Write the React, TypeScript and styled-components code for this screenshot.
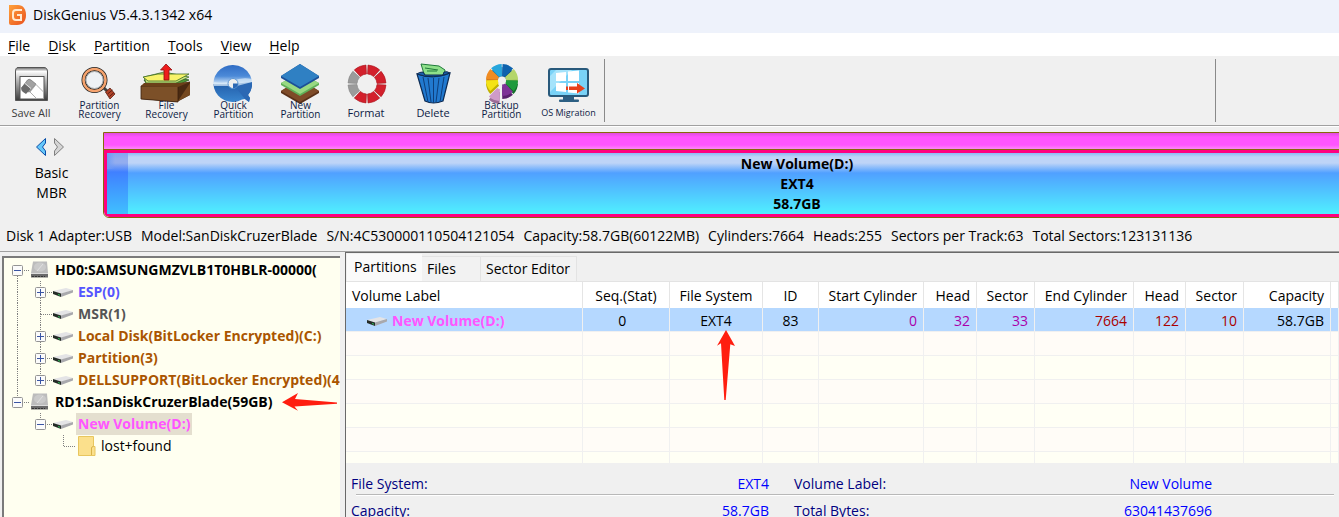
import React from 'react';
import styled, { createGlobalStyle } from 'styled-components';

const GlobalStyle = createGlobalStyle`
  *, *::before, *::after { box-sizing: border-box; }
  body { margin: 0; background: #f0f0f0; }
  button { font: inherit; color: inherit; border: 0; padding: 0; margin: 0; background: none; cursor: pointer; }
`;

const Window = styled.div`
  display: flex;
  flex-direction: column;
  height: 100vh;
  overflow: hidden;
  background: #f0f0f0;
  color: #000;
  font-family: 'Open Sans', 'Noto Sans', sans-serif;
  font-size: 14px;
  line-height: 20px;
  white-space: nowrap;
`;

const TitleBar = styled.header`
  display: flex;
  flex: none;
  align-items: center;
  gap: 6px;
  height: 33px;
  padding: 0 8px 4px;
  background: #eef2fb;
`;

const Title = styled.h1`
  margin: 0;
  font-size: 14px;
  font-weight: 400;
`;

const MenuBar = styled.nav`
  display: flex;
  flex: none;
  align-items: center;
  gap: 18px;
  height: 23px;
  padding: 2px 8px 0;
  background: #fff;
`;

const MenuItem = styled.button`
  line-height: 20px;
  u { text-underline-offset: 2px; }
`;

const Toolbar = styled.div`
  display: flex;
  flex: none;
  gap: 7px;
  height: 71px;
  padding: 3px 1px 0;
  border-bottom: 1px solid #fff;
  box-shadow: inset 0 -1px 0 #a0a0a0;
`;

const ToolButton = styled.button`
  display: flex;
  flex-direction: column;
  align-items: center;
  width: 60px;
  height: 64px;
  padding-top: 2px;
  color: #0d1b45;
  svg { display: block; overflow: visible; }
`;

const ToolLabel = styled.span<{ $size: number; $muted?: boolean }>`
  display: flex;
  align-items: flex-end;
  justify-content: center;
  height: 18px;
  font-size: ${(p) => p.$size}px;
  line-height: 9px;
  text-align: center;
  white-space: pre-line;
  color: ${(p) => (p.$muted ? '#3c3c3c' : 'inherit')};
  padding-bottom: ${(p) => (p.$size === 10 ? 0 : 2)}px;
  padding-left: ${(p) => (p.$size === 11 ? 0 : 3)}px;
`;

const ToolSeparator = styled.div<{ $gap?: number }>`
  width: 1px;
  height: 63px;
  margin-left: ${(p) => p.$gap ?? 0}px;
  background: #8a8a8a;
`;

const DiskPanel = styled.section`
  display: grid;
  flex: none;
  grid-template-columns: 103px 1fr;
  padding-top: 5px;
  overflow: hidden;
`;

const DiskKind = styled.div`
  display: flex;
  flex-direction: column;
  align-items: center;
  padding-top: 5px;
`;

const DiskNav = styled.div`
  display: flex;
  gap: 6px;
  height: 26px;
  padding-right: 3px;
  button { display: flex; height: 20px; }
`;

const DiskBar = styled.div`
  display: flex;
  flex-direction: column;
  height: 86px;
  margin-right: -151px;
  border: 1px solid #86690c;
  border-radius: 0 0 6px 6px;
  overflow: hidden;
`;

const DiskStrip = styled.div`
  height: 17px;
  border-bottom: 1px solid #86690c;
  background: linear-gradient(#e04ce0, #ff55ff 4px, #ff55ff 12px, #ff88f8);
`;

const VolumeBlock = styled.div`
  display: grid;
  grid-template-columns: 21px 1fr;
  flex: 1;
  border: 3px solid #ff0080;
  border-radius: 0 0 5px 5px;
  background: linear-gradient(#8db8f6, #bed4f7 4px, #bed4f7 10px, #50a0ff 20px, #50f0ff);
`;

const UsedSpace = styled.div`
  background: linear-gradient(90deg, #6f9cf5, transparent 8px) 0 0 / 100% 16px no-repeat,
    linear-gradient(#82a4f2, #93adef 6px, #93adef 10px, #4080ff 19px, #40c0ff);
`;

const VolumeText = styled.div`
  padding: 1px 20px 0 0;
  font-weight: 700;
  text-align: center;
`;

const DiskInfo = styled.div`
  display: flex;
  flex: none;
  gap: 9px;
  height: 34px;
  padding: 8px 6px 0;
  border-bottom: 1px solid #a0a0a0;
`;

const Panes = styled.main`
  display: grid;
  grid-template-columns: 340px 1fr;
  gap: 5px;
  flex: 1;
  min-height: 0;
`;

const TreePane = styled.div`
  position: relative;
  margin: 4px 0 0 2px;
  border: solid #7a7a7a;
  border-width: 2px 0 0 2px;
  background: #fffff0;
  overflow: hidden;
`;

const TreeList = styled.ul`
  margin: 0;
  padding: 1px 0 0 2px;
  list-style: none;
`;

const TreeRow = styled.li`
  display: flex;
  align-items: center;
  height: 22px;
  svg { flex: none; display: block; }
`;

const TreeLabel = styled.button<{ $color: string; $bold?: boolean; $selected?: boolean }>`
  height: 22px;
  margin-left: 2px;
  padding: 0 2px;
  color: ${(p) => p.$color};
  font-weight: ${(p) => (p.$bold ? 700 : 400)};
  background: ${(p) => (p.$selected ? '#e4dfcf' : 'transparent')};
`;

const ContentPane = styled.div`
  min-width: 0;
  border: solid #696969;
  border-width: 1px 0 0 1px;
`;

const TabStrip = styled.div`
  display: flex;
  align-items: flex-end;
  height: 29px;
  padding: 0 1px;
  border-bottom: 1px solid #e3e3e3;
`;

const Tab = styled.button<{ $active?: boolean; $width: number }>`
  width: ${(p) => p.$width}px;
  height: ${(p) => (p.$active ? 27 : 25)}px;
  padding: ${(p) => (p.$active ? '0 0 3px 7px' : '0 0 1px 5px')};
  border: 1px solid ${(p) => (p.$active ? '#fafafa' : '#e3e3e3')};
  border-width: 1px 1px 0 0;
  background: ${(p) => (p.$active ? '#fafafa' : '#f2f2f2')};
  text-align: left;
`;

const TableArea = styled.div`
  position: relative;
  height: 181px;
  overflow: hidden;
`;

const Table = styled.table`
  width: 100%;
  table-layout: fixed;
  border-collapse: separate;
  border-spacing: 0;
`;

const HeadCell = styled.th<{ $align: string }>`
  height: 26px;
  padding: 2px 6px 0;
  border-right: 1px solid #e5e5e5;
  background: #fff;
  font-weight: 400;
  text-align: ${(p) => p.$align};
`;

const BodyRow = styled.tr<{ $selected?: boolean }>`
  background: ${(p) => (p.$selected ? '#b5d8ff' : '#fffcf7')};
  &:nth-child(odd) { background: ${(p) => (p.$selected ? '#b5d8ff' : '#fffff5')}; }
`;

const Cell = styled.td<{ $align: string; $color?: string }>`
  height: 24px;
  padding: 2px 6px 0;
  border: solid #f0f0f0;
  border-width: 0 1px 1px 0;
  color: ${(p) => p.$color ?? '#000'};
  text-align: ${(p) => p.$align};
`;

const VolumeName = styled.div`
  display: flex;
  align-items: center;
  gap: 4px;
  height: 20px;
  padding-left: 14px;
  color: #ff55ff;
  font-weight: 700;
`;

const Pointer = styled.svg<{ $left: number; $top: number }>`
  position: absolute;
  left: ${(p) => p.$left}px;
  top: ${(p) => p.$top}px;
  fill: #ff1e10;
  pointer-events: none;
`;

const Details = styled.dl`
  margin: 0;
  padding: 9px 5px 0;
`;

const DetailRow = styled.div`
  display: grid;
  grid-template-columns: 159px 259px 159px 259px;
  height: 27px;
  padding-top: 2px;
  background: linear-gradient(#b8b8b8 0 0) 5px 22px / 100% 1px no-repeat,
    linear-gradient(#fff 0 0) 5px 23px / 100% 1px no-repeat;
  dt:nth-of-type(2) { padding-left: 25px; }
  dd:nth-of-type(2) { padding-left: 25px; margin-right: -25px; }
`;

const DetailName = styled.dt`
  color: #000080;
`;

const DetailValue = styled.dd`
  margin: 0;
  color: #0000ff;
  text-align: right;
`;

/* ---------- drawings ---------- */

const ring = (cx: number, cy: number, r0: number, r1: number, a0: number, a1: number) => {
  const at = (r: number, a: number) => {
    const t = ((a - 90) * Math.PI) / 180;
    return `${(cx + r * Math.cos(t)).toFixed(2)} ${(cy + r * Math.sin(t)).toFixed(2)}`;
  };
  return `M${at(r0, a0)}L${at(r1, a0)}A${r1} ${r1} 0 0 1 ${at(r1, a1)}L${at(r0, a1)}A${r0} ${r0} 0 0 0 ${at(r0, a0)}Z`;
};

const Art = ({ children }: { children: React.ReactNode }) => (
  <svg width="52" height="40" viewBox="0 0 52 40" aria-hidden="true">{children}</svg>
);

const LogoIcon = () => (
  <svg width="19" height="20" viewBox="0 0 19 20" aria-hidden="true">
    <defs>
      <linearGradient id="logo" x1="0" y1="0" x2="1" y2="1">
        <stop offset="0" stopColor="#ffa23c" /><stop offset="1" stopColor="#e9501c" />
      </linearGradient>
    </defs>
    <path d="M1 0H10C15 0 18 4 18 10S15 20 9 20H3Q1 20 1 18Z" fill="url(#logo)" />
    <path d="M14 5H8Q5 5 5 8V12Q5 15 8 15H13V10H9" fill="none" stroke="#ffe9d0" strokeWidth="2" />
  </svg>
);

const SaveIcon = () => (
  <Art>
    <defs>
      <linearGradient id="save" x1="0" y1="0" x2="0" y2="1">
        <stop offset="0" stopColor="#666" /><stop offset=".12" stopColor="#fdfdfd" />
        <stop offset=".35" stopColor="#c0c0c0" /><stop offset="1" stopColor="#3a3a3a" />
      </linearGradient>
    </defs>
    <path d="M13 6.500H39Q42.500 6.500 42.500 11V39.500H10.500V11Q10.500 6.500 13 6.500Z" fill="url(#save)" stroke="#555" />
    <rect x="15" y="15.500" width="24" height="22.500" fill="#fff" stroke="#555" />
    <path d="M16.500 27L22.500 19Q24 17.500 26 19L31 23L24.500 31L19 30Z" fill="#a2a2a2" stroke="#666" strokeWidth=".6" />
    <path d="M16.500 26.500Q15.500 29 18 31L21 33L25.500 28L20 22.500Z" fill="#6a6a6a" />
    <path d="M20 22.500L26 27.500" stroke="#e4e4e4" />
    <path d="M25 31L31 23.500L38.500 31V37.500H31.500Z" fill="#fff" stroke="#999" strokeWidth=".8" />
  </Art>
);

const SearchIcon = () => (
  <Art>
    <path d="M31 26L36 31" stroke="#444" strokeWidth="3" />
    <path d="M33.500 31L38 27L43 33L38 38Z" fill="#b3442a" stroke="#5a1f12" strokeWidth=".8" />
    <path d="M35.500 33L40.500 29M37.500 35.500L42 31.500" stroke="#5a1f12" />
    <circle cx="22.500" cy="19" r="11" fill="#eef1f5" stroke="#222" strokeWidth="4" />
    <circle cx="22.500" cy="19" r="11" fill="none" stroke="#f5a36e" strokeWidth="2.500" />
    <circle cx="22.500" cy="19" r="8.500" fill="none" stroke="#999" strokeWidth=".8" />
  </Art>
);

const FileRecoveryIcon = () => (
  <Art>
    <g transform="translate(1 0)">
      <path d="M4 19L24 13L49 19L36 25H8Z" fill="#4d9a3a" stroke="#1e4a16" strokeWidth=".7" />
      <path d="M4 16L24 11L49 16L36 22H6Z" fill="#c9e27c" stroke="#2c5e1f" strokeWidth=".7" />
      <path d="M3 16L18 13H49L36 20H8Z" fill="#f8f36a" stroke="#3a6a22" strokeWidth=".8" />
      <path d="M1 25L4 23H37L50 20.500V34L37 41L1 38Z" fill="#4a2a12" />
      <path d="M1 25H38V41L1 38Z" fill="#7c5028" stroke="#3a200c" strokeWidth=".8" />
      <path d="M1 25L4 22H36L50 21L38 26Z" fill="#6b4019" />
      <path d="M38 40L50 22V34Z" fill="#75481f" />
      <path d="M26 3L32 9H29V19H24V9H20.500Z" fill="#ee1c1c" stroke="#8e0f0f" strokeWidth=".8" />
    </g>
  </Art>
);

const QuickIcon = () => (
  <Art>
    <defs>
      <linearGradient id="disc" x1="0" y1="0" x2="0" y2="1">
        <stop offset="0" stopColor="#2f6cc4" /><stop offset=".3" stopColor="#4c8ad8" /><stop offset=".52" stopColor="#d8eafa" />
        <stop offset=".53" stopColor="#2461ad" /><stop offset="1" stopColor="#3a86cf" />
      </linearGradient>
    </defs>
    <g transform="translate(1 0)">
      <path d="M26 4A19 18.500 0 0 1 41 34L43 37L42 41L38 38L35 38.500A19 18.500 0 1 1 26 4Z" fill="url(#disc)" />
      <path d="M26 23L45 21A19 18.500 0 0 1 41 34L43 37L42 41L38 38Z" fill="#2b68b4" />
      <path d="M7 25L22 25L30 25L45 21V18Q34 16 26 20Q16 23 7 21Z" fill="#d9e9f8" opacity=".7" />
      <circle cx="26" cy="22.500" r="5" fill="#efefef" stroke="#5c96d4" />
      <path d="M26 22.500H31A5 5 0 0 1 26 27.500Z" fill="#2b68b4" />
    </g>
  </Art>
);

const LayersIcon = () => (
  <Art>
    <g transform="translate(1 0)">
      <path d="M7 30L26 18L45 30V32L26 43L7 32Z" fill="#5a3018" />
      <path d="M7 30L26 18L45 30L26 41Z" fill="#7e4b28" />
      <path d="M7 22L26 12L45 22V24L26 35L7 24Z" fill="#5faf58" />
      <path d="M7 22L26 12L45 22L26 33Z" fill="#98d982" />
      <path d="M7 15L26 3L45 15V17L26 28L7 17Z" fill="#1c4f97" />
      <path d="M7 15L26 3L45 15L26 26Z" fill="#2f80c3" />
    </g>
  </Art>
);

const FormatIcon = () => (
  <Art>
    {[0, 1, 2, 3, 4, 5, 6, 7].map((i) => (
      <path key={i} d={ring(27, 23, 10, 19, i * 45 + 3, i * 45 + 42)} fill={i === 5 || i === 6 ? '#9b9b9b' : '#d3202c'} stroke={i === 5 || i === 6 ? '#858585' : '#a8161f'} strokeWidth=".6" />
    ))}
  </Art>
);

const DeleteIcon = () => (
  <Art>
    <path d="M14 3L32 5L38 9L37 16H18Z" fill="#8ee08a" stroke="#1f7a3a" />
    <path d="M18 7L31 9M20 10H30" stroke="#1f7a3a" />
    <path d="M10 13Q26 19 43 12L36 40Q26 44 18 40Z" fill="#2179cf" stroke="#0e2b52" strokeWidth="1.200" />
    <path d="M10 13Q26 19 43 12Q40 10 37 11L36 14H18L16 11Q12 11 10 13Z" fill="#1a5fa8" stroke="#0e2b52" />
    <path d="M16 16L21 41M21 17L24 41M26.500 17V42M32 17L29 41M37 16L33 41" stroke="#0e3f7c" />
  </Art>
);

const wheel = ['#0e62ad', '#b4d66a', '#1f9a3c', '#7d3296', '#cf9bc8', '#f4e316', '#f08c22', '#27a6dc'];
const wheelShade = ['#0a4680', '#88a848', '#14702a', '#58206c', '#9c6d96', '#c0b000', '#b86412', '#1a7cab'];

const BackupIcon = () => (
  <Art>
    {[wheelShade, wheel].map((colors, layer) => (
      <g key={layer} transform={layer === 0 ? 'translate(0 3)' : undefined}>
        {colors.map((c, i) => (
          <path
            key={c}
            d={ring(28, 19, 4, 16, i * 45 + 2, i * 45 + 44)}
            transform={i === 4 ? 'translate(-2 5)' : undefined}
            fill={c}
          />
        ))}
      </g>
    ))}
    <circle cx="28" cy="19.500" r="4" fill="#f0f0f0" />
  </Art>
);

const MigrationIcon = () => (
  <Art>
    <g transform="translate(1 0)">
      <path d="M21 34H32V39H21Z" fill="#2c5f83" />
      <rect x="17" y="38.500" width="20" height="2.500" rx="1" fill="#2c5f83" />
      <rect x="7" y="8" width="39" height="27" rx="2" fill="#79d2f7" stroke="#28597b" strokeWidth="2" />
      <path d="M8 31L30 9H14L8 15Z" fill="#a5e3fb" />
      <path d="M14 12L24 11V20H14ZM26 10.500L37 9.500V20H26ZM14 22H24V31L14 30ZM26 22H37V32.500L26 31.500Z" fill="#fff" />
      <path d="M24 25.500H26V29H24ZM27 25.500H35V22L43 27.500L35 32.500V29H27Z" fill="#e8401c" />
    </g>
  </Art>
);

const NavArrow = ({ forward }: { forward?: boolean }) => (
  <svg width="12" height="20" viewBox="0 0 12 20" aria-hidden="true">
    {forward ? (
      <path d="M1.500 1.500L10.500 10L1.500 18.500V14L4.500 10L1.500 6Z" fill="#d5d5d5" stroke="#808080" />
    ) : (
      <path d="M10.500 1.500L1.500 10L10.500 18.500V14L7.500 10L10.500 6Z" fill="#66c8fa" stroke="#0a4fa8" />
    )}
  </svg>
);

const DriveIcon = () => (
  <svg width="22" height="22" viewBox="0 0 22 22" aria-hidden="true">
    <path d="M1 10L14 7L21 9L9 13Z" fill="#e4e4e6" />
    <path d="M1 10L9 12.500V16L1 13Z" fill="#252c27" />
    <path d="M9 12.500L21 9V11.500L9 16Z" fill="#a9a9ad" />
    <path d="M6 13.500L8 14.200" stroke="#2fc45a" />
  </svg>
);

const HardDiskIcon = () => (
  <svg width="22" height="22" viewBox="0 0 22 22" aria-hidden="true">
    <path d="M4 2.500H18L19 14H2Z" fill="#bcbcbc" />
    <ellipse cx="11" cy="8" rx="6" ry="4.500" fill="#cacaca" />
    <path d="M14 5L8 12" stroke="#e0e0e0" />
    <path d="M2 14H19V18.500H2Z" fill="#6a6a6a" />
    <path d="M2 14.500H19" stroke="#dcdcdc" />
    <path d="M3 17.500H16" stroke="#333" strokeDasharray="2 1" />
  </svg>
);

const FolderIcon = () => (
  <svg width="22" height="22" viewBox="0 0 22 22" aria-hidden="true">
    <path d="M3.500 1.500H18.500V11.500H20V20.500H3.500Z" fill="#fbe08c" stroke="#e8c65e" />
    <path d="M16.500 20V13Q16.500 11.500 18.500 11.500" fill="none" stroke="#d9b34a" />
  </svg>
);

type Branch = { up?: boolean; down?: boolean; right?: boolean; box?: '+' | '-' };

const BranchCell = ({ up, down, right, box }: Branch) => (
  <svg width="23" height="22" viewBox="0 0 23 22" aria-hidden="true">
    <g stroke="#808080" strokeDasharray="1 1">
      {up && <path d="M11.500 0V11" />}
      {down && <path d="M11.500 11V22" />}
      {right && <path d="M12 11.500H23" />}
    </g>
    {box && <rect x="6.500" y="6.500" width="10" height="10" rx="1" fill="#fbfbfb" stroke="#949494" />}
    {box && <path d={box === '+' ? 'M8 11.500H15M11.500 8V15' : 'M8 11.500H15'} stroke="#3a55a4" />}
  </svg>
);

/* ---------- data ---------- */

const tools = [
  { label: 'Save All', size: 11, icon: <SaveIcon />, muted: true },
  { label: 'Partition\nRecovery', size: 10, icon: <SearchIcon /> },
  { label: 'File\nRecovery', size: 10, icon: <FileRecoveryIcon /> },
  { label: 'Quick\nPartition', size: 10, icon: <QuickIcon /> },
  { label: 'New\nPartition', size: 10, icon: <LayersIcon /> },
  { label: 'Format', size: 11, icon: <FormatIcon /> },
  { label: 'Delete', size: 11, icon: <DeleteIcon /> },
  { label: 'Backup\nPartition', size: 10, icon: <BackupIcon /> },
  { label: 'OS Migration', size: 9, icon: <MigrationIcon /> },
];

const diskInfo = [
  'Disk 1 Adapter:USB', 'Model:SanDiskCruzerBlade', 'S/N:4C530000110504121054', 'Capacity:58.7GB(60122MB)',
  'Cylinders:7664', 'Heads:255', 'Sectors per Track:63', 'Total Sectors:123131136',
];

type Node = { label: string; color: string; bold?: boolean; selected?: boolean; icon: React.ReactNode; cells: Branch[] };

const tree: Node[] = [
  { label: 'HD0:SAMSUNGMZVLB1T0HBLR-00000(', color: '#000', bold: true, icon: <HardDiskIcon />, cells: [{ down: true, right: true, box: '-' }] },
  { label: 'ESP(0)', color: '#5555ff', bold: true, icon: <DriveIcon />, cells: [{ up: true, down: true }, { up: true, down: true, right: true, box: '+' }] },
  { label: 'MSR(1)', color: '#555', bold: true, icon: <DriveIcon />, cells: [{ up: true, down: true }, { up: true, down: true, right: true }] },
  { label: 'Local Disk(BitLocker Encrypted)(C:)', color: '#aa5500', bold: true, icon: <DriveIcon />, cells: [{ up: true, down: true }, { up: true, down: true, right: true, box: '+' }] },
  { label: 'Partition(3)', color: '#aa5500', bold: true, icon: <DriveIcon />, cells: [{ up: true, down: true }, { up: true, down: true, right: true, box: '+' }] },
  { label: 'DELLSUPPORT(BitLocker Encrypted)(4', color: '#aa5500', bold: true, icon: <DriveIcon />, cells: [{ up: true, down: true }, { up: true, right: true, box: '+' }] },
  { label: 'RD1:SanDiskCruzerBlade(59GB)', color: '#000', bold: true, icon: <HardDiskIcon />, cells: [{ up: true, right: true, box: '-' }] },
  { label: 'New Volume(D:)', color: '#ff55ff', bold: true, selected: true, icon: <DriveIcon />, cells: [{}, { up: true, right: true, box: '-' }] },
  { label: 'lost+found', color: '#000', icon: <FolderIcon />, cells: [{}, {}, { up: true, right: true }] },
];

const columns = [
  { name: 'Volume Label', width: 237, align: 'left' },
  { name: 'Seq.(Stat)', width: 87, align: 'center', value: '0\u00a0\u00a0' },
  { name: 'File System', width: 93, align: 'center', value: 'EXT4' },
  { name: 'ID', width: 56, align: 'center', value: '83' },
  { name: 'Start Cylinder', width: 105, align: 'right', value: '0', color: '#aa00aa' },
  { name: 'Head', width: 53, align: 'right', value: '32', color: '#aa00aa' },
  { name: 'Sector', width: 58, align: 'right', value: '33', color: '#aa00aa' },
  { name: 'End Cylinder', width: 99, align: 'right', value: '7664', color: '#aa0000' },
  { name: 'Head', width: 52, align: 'right', value: '122', color: '#aa0000' },
  { name: 'Sector', width: 58, align: 'right', value: '10', color: '#aa0000' },
  { name: 'Capacity', width: 87, align: 'right', value: '58.7GB' },
];

const details = [
  ['File System:', 'EXT4', 'Volume Label:', 'New Volume'],
  ['Capacity:', '58.7GB', 'Total Bytes:', '63041437696'],
];

export default function App() {
  return (
    <Window>
      <GlobalStyle />
      <TitleBar>
        <LogoIcon />
        <Title>DiskGenius V5.4.3.1342 x64</Title>
      </TitleBar>
      <MenuBar>
        {['File', 'Disk', 'Partition', 'Tools', 'View', 'Help'].map((m) => (
          <MenuItem key={m}><u>{m[0]}</u>{m.slice(1)}</MenuItem>
        ))}
      </MenuBar>
      <Toolbar>
        {tools.map((t) => (
          <ToolButton key={t.label}>
            {t.icon}
            <ToolLabel $size={t.size} $muted={t.muted}>{t.label}</ToolLabel>
          </ToolButton>
        ))}
        <ToolSeparator />
        <ToolSeparator $gap={603} />
      </Toolbar>

      <DiskPanel>
        <DiskKind>
          <DiskNav>
            <button aria-label="Previous disk"><NavArrow /></button>
            <button aria-label="Next disk"><NavArrow forward /></button>
          </DiskNav>
          <span>Basic</span>
          <span>MBR</span>
        </DiskKind>
        <DiskBar>
          <DiskStrip />
          <VolumeBlock>
            <UsedSpace />
            <VolumeText>
              <div>New Volume(D:)</div>
              <div>EXT4</div>
              <div>58.7GB</div>
            </VolumeText>
          </VolumeBlock>
        </DiskBar>
      </DiskPanel>
      <DiskInfo>
        {diskInfo.map((d) => <span key={d}>{d}</span>)}
      </DiskInfo>

      <Panes>
        <TreePane>
          <TreeList>
            {tree.map((n) => (
              <TreeRow key={n.label}>
                {n.cells.map((c, i) => <BranchCell key={i} {...c} />)}
                {n.icon}
                <TreeLabel $color={n.color} $bold={n.bold} $selected={n.selected}>{n.label}</TreeLabel>
              </TreeRow>
            ))}
          </TreeList>
          <Pointer $left={278} $top={135} width="56" height="18" viewBox="0 0 56 18" aria-hidden="true">
            <path d="M0 9.300L16 0L13 6L55 9.500V10.800L12.500 13.500L16 17.700Z" />
          </Pointer>
        </TreePane>

        <ContentPane>
          <TabStrip role="tablist">
            <Tab role="tab" aria-selected $active $width={75}>Partitions</Tab>
            <Tab role="tab" $width={59}>Files</Tab>
            <Tab role="tab" $width={96}>Sector Editor</Tab>
          </TabStrip>
          <TableArea>
            <Table>
              <colgroup>
                {columns.map((c, i) => <col key={i} style={{ width: c.width }} />)}
                <col />
              </colgroup>
              <thead>
                <tr>
                  {columns.map((c, i) => <HeadCell key={i} $align={c.align}>{c.name}</HeadCell>)}
                  <HeadCell $align="left" />
                </tr>
              </thead>
              <tbody>
                <BodyRow $selected>
                  {columns.map((c, i) => (
                    <Cell key={i} $align={c.align} $color={c.color}>
                      {i === 0 ? <VolumeName><DriveIcon />New Volume(D:)</VolumeName> : c.value}
                    </Cell>
                  ))}
                  <Cell $align="left" />
                </BodyRow>
                {[1, 2, 3, 4, 5, 6].map((r) => (
                  <BodyRow key={r}>
                    {columns.map((c, i) => <Cell key={i} $align={c.align} />)}
                    <Cell $align="left" />
                  </BodyRow>
                ))}
              </tbody>
            </Table>
            <Pointer $left={371} $top={48} width="18" height="71" viewBox="0 0 18 71" aria-hidden="true">
              <path d="M9 0L18 16L13.300 14.300L8.700 70H7.300L4 13.300L0 15.700Z" />
            </Pointer>
          </TableArea>
          <Details>
            {details.map(([a, b, c, d]) => (
              <DetailRow key={a}>
                <DetailName>{a}</DetailName>
                <DetailValue>{b}</DetailValue>
                <DetailName>{c}</DetailName>
                <DetailValue>{d}</DetailValue>
              </DetailRow>
            ))}
          </Details>
        </ContentPane>
      </Panes>
    </Window>
  );
}
